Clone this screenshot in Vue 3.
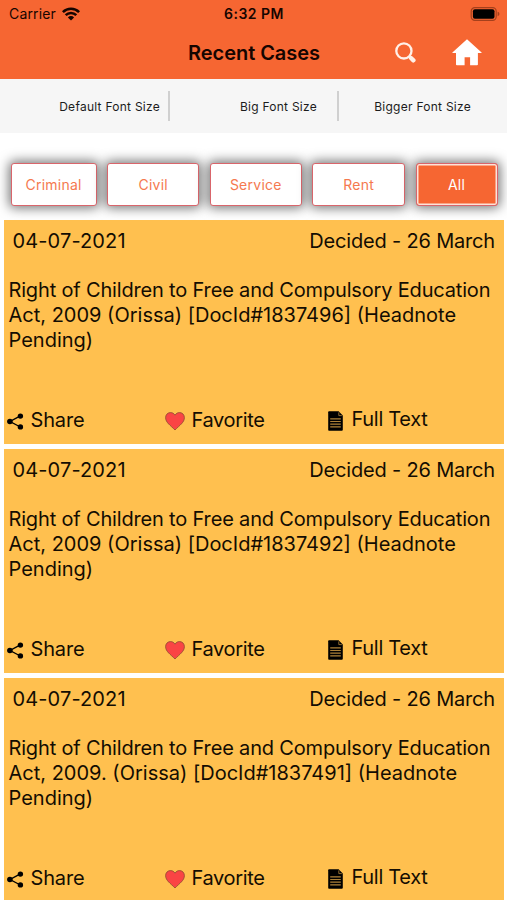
<script setup>
import { ref } from "vue";

const fontSizes = ["Default Font Size", "Big Font Size", "Bigger Font Size"];
const filters = ["Criminal", "Civil", "Service", "Rent", "All"];
const activeFilter = ref("All");

const cases = ref([
  {
    id: 1837496,
    date: "04-07-2021",
    decided: "26 March",
    subject: "Right of Children to Free and Compulsory Education",
    citation: "Act, 2009 (Orissa)",
  },
  {
    id: 1837492,
    date: "04-07-2021",
    decided: "26 March",
    subject: "Right of Children to Free and Compulsory Education",
    citation: "Act, 2009 (Orissa)",
  },
  {
    id: 1837491,
    date: "04-07-2021",
    decided: "26 March",
    subject: "Right of Children to Free and Compulsory Education",
    citation: "Act, 2009. (Orissa)",
  },
]);
</script>

<template>
  <main>
    <header>
      <div class="status">
        <div class="carrier">
          <span>Carrier</span>
          <svg width="18" height="14" viewBox="0 0 18 14">
            <g fill="none" stroke="#160500" stroke-width="2.6">
              <path d="M0.9 5.1a11.5 11.5 0 0 1 16.2 0" />
              <path d="M3.7 8.2a7.5 7.5 0 0 1 10.6 0" />
            </g>
            <path d="M9 13.6L5.9 10.4a4.4 4.4 0 0 1 6.2 0z" fill="#160500" />
          </svg>
        </div>
        <span class="time">6:32 PM</span>
        <svg class="battery" width="31" height="14" viewBox="0 0 31 14">
          <rect x="1.2" y="0.7" width="25" height="12.6" rx="3.6" fill="none" stroke="#a5401c" stroke-width="1.2" />
          <rect x="2.9" y="2.2" width="21.6" height="9.6" rx="2" fill="#000" />
          <path d="M27.6 4.8c2.4 0.6 2.4 3.8 0 4.4z" fill="#a5401c" />
        </svg>
      </div>
      <div class="navbar">
        <h1>Recent Cases</h1>
        <div class="actions">
          <svg width="21" height="21" viewBox="0 0 21 21">
            <circle cx="8.9" cy="8.9" r="7.6" fill="none" stroke="#fff0e8" stroke-width="2.3" />
            <path d="M14.2 14.4L15.4 15.6" stroke="#fff0e8" stroke-width="2.8" />
            <path d="M16 16L18.4 18.3" stroke="#fff0e8" stroke-width="4.4" stroke-linecap="round" />
          </svg>
          <svg width="30" height="27" viewBox="0 0 30 27">
            <path d="M15 0.3L29.6 13.4Q30 14 29 14H25.9V25.5Q25.9 26.3 25 26.3H18.1V18.3H12.6V26.3H4.9Q4 26.3 4 25.5V14H1Q0 14 0.4 13.4z" fill="#fff" />
          </svg>
        </div>
      </div>
    </header>

    <div class="font-sizes">
      <button v-for="size in fontSizes" :key="size">{{ size }}</button>
    </div>

    <div class="filters">
      <button
        v-for="filter in filters"
        :key="filter"
        :class="{ active: filter === activeFilter }"
        @click="activeFilter = filter"
      >
        {{ filter }}
      </button>
    </div>

    <div class="card-container">
      <div v-for="item in cases" :key="item.id" class="card">
        <div class="card-top">
          <span class="date">{{ item.date }}</span>
          <span class="decided">Decided - {{ item.decided }}</span>
        </div>
        <div class="title">
          <p class="subject">{{ item.subject }}</p>
          <p>{{ item.citation }} [DocId#{{ item.id }}] (Headnote Pending)</p>
        </div>
        <div class="card-actions">
          <a class="share">
            <svg width="17" height="17" viewBox="0 0 17 17">
              <path d="M13.4 2.9L3 8.5L13.4 14" fill="none" stroke="#000" stroke-width="1.4" />
              <circle cx="13.4" cy="3.1" r="2.7" />
              <circle cx="2.9" cy="8.5" r="2.8" />
              <circle cx="13.4" cy="13.9" r="2.7" />
            </svg>
            <span>Share</span>
          </a>
          <a class="favorite">
            <svg width="20" height="19" viewBox="0 0 20 19">
              <path
                d="M10 3.2C8.6 0.9 6.8 0.6 5.4 0.6C2.6 0.6 0.6 2.8 0.6 5.7C0.6 10.4 5.4 13.3 10 18C14.6 13.3 19.4 10.4 19.4 5.7C19.4 2.8 17.4 0.6 14.6 0.6C13.2 0.6 11.4 0.9 10 3.2z"
                fill="#fa4444"
                stroke="#8c4c32"
                stroke-width="0.8"
              />
            </svg>
            <span>Favorite</span>
          </a>
          <a class="full-text">
            <svg width="15" height="20" viewBox="0 0 15 20">
              <path d="M1 0.3H10.6L14.8 4.6V18.8Q14.8 19.8 13.8 19.8H1Q0.2 19.8 0.2 18.8V1.2Q0.2 0.3 1 0.3z" />
              <path d="M10.8 1.4V4.6H13.8" fill="none" stroke="#c99643" stroke-width="0.7" />
              <path d="M2.2 7.8H12.8M2.2 10.5H12.8M2.2 13.2H12.8M2.2 15.9H12.8" stroke="#ad8138" stroke-width="1.2" />
            </svg>
            <span>Full Text</span>
          </a>
        </div>
      </div>
    </div>
  </main>
</template>

<style>
body {
  margin: 0;
  overflow: hidden;
}
</style>

<style scoped>
main {
  height: 900px;
  width: 507px;
  overflow: hidden;
  background-color: #fff;
  font-family: Inter, "Liberation Sans", sans-serif;
  color: #140d02;
}
button {
  font-family: inherit;
  margin: 0;
  padding: 0;
  border: none;
  background: none;
  cursor: pointer;
}
svg {
  display: block;
  flex: none;
}
header {
  height: 79px;
  background-color: #f66632;
  color: #160500;
}
.status {
  display: grid;
  grid-template-columns: 1fr auto 1fr;
  align-items: center;
  height: 27px;
  padding: 0 6px 0 9px;
}
.carrier {
  display: flex;
  align-items: center;
  gap: 6px;
  font-size: 14px;
  letter-spacing: 0.15px;
}
.time {
  margin-right: 2px;
  font-size: 14px;
  font-weight: 600;
  letter-spacing: 0.5px;
}
.battery {
  justify-self: end;
}
.navbar {
  display: grid;
  grid-template-columns: 1fr auto 1fr;
  align-items: center;
  height: 52px;
}
h1 {
  grid-column: 2;
  margin: 0 0 0 1px;
  font-size: 20px;
  font-weight: 600;
  letter-spacing: -0.05px;
}
.actions {
  display: flex;
  align-items: center;
  justify-content: flex-end;
  gap: 36px;
  padding-right: 25px;
}
.actions svg:first-child {
  margin-bottom: 2px;
}
.actions svg:last-child {
  margin-bottom: 1px;
}
.font-sizes {
  display: flex;
  height: 54px;
  align-items: center;
  background-color: #f6f6f6;
}
.font-sizes button {
  box-sizing: border-box;
  width: 169px;
  height: 30px;
  padding-right: 8px;
  text-align: right;
  font-size: 12px;
  letter-spacing: 0.26px;
  color: #1c1c1c;
  border-right: 2px solid #d0d0d0;
}
.font-sizes button:first-child {
  width: 170px;
}
.font-sizes button:nth-child(2) {
  padding-right: 20px;
}
.font-sizes button:last-child {
  width: 168px;
  padding-right: 36px;
  border-right: none;
}
.filters {
  display: grid;
  grid-template-columns: 86px 92px 92px 92.6px 82px;
  gap: 10.6px;
  height: 43px;
  padding: 30px 0 14px 10.6px;
}
.filters button {
  border: 1px solid #d9656b;
  border-radius: 3px;
  background-color: #fff;
  box-shadow: 0 0 12px 2px rgba(0, 0, 0, 0.55);
  color: #f5794f;
  font-size: 14px;
  letter-spacing: 0.25px;
}
.filters .active {
  background-color: #f66632;
  color: #fff;
  box-shadow: inset 0 0 0 1.5px #fde3da, 0 0 12px 2px rgba(0, 0, 0, 0.55);
}
.card-container {
  position: relative;
  display: flex;
  flex-direction: column;
  gap: 5px;
  padding: 0 3px 0 3.5px;
}
.card {
  display: flex;
  flex-direction: column;
  box-sizing: border-box;
  height: 224px;
  padding: 9px 5px 0;
  background-color: #ffc04f;
  font-size: 20px;
  line-height: 25px;
}
.card-top {
  display: flex;
  justify-content: space-between;
  padding: 0 4px;
}
.date {
  letter-spacing: 0.12px;
}
.decided {
  letter-spacing: -0.18px;
}
.title {
  margin-top: 24px;
  height: 75px;
}
p {
  margin: 0;
}
.subject {
  letter-spacing: -0.17px;
}
.card-actions {
  display: grid;
  grid-template-columns: 158px 163px 1fr;
  margin: 55px 0 0 -2px;
}
.card-actions a {
  display: flex;
  align-items: center;
  gap: 7px;
  letter-spacing: -0.15px;
}
.card-actions svg {
  margin-top: 2px;
}
.card-actions .favorite {
  letter-spacing: -0.35px;
}
.card-actions .full-text {
  margin-top: -2px;
  gap: 9px;
  letter-spacing: -0.3px;
}
</style>
